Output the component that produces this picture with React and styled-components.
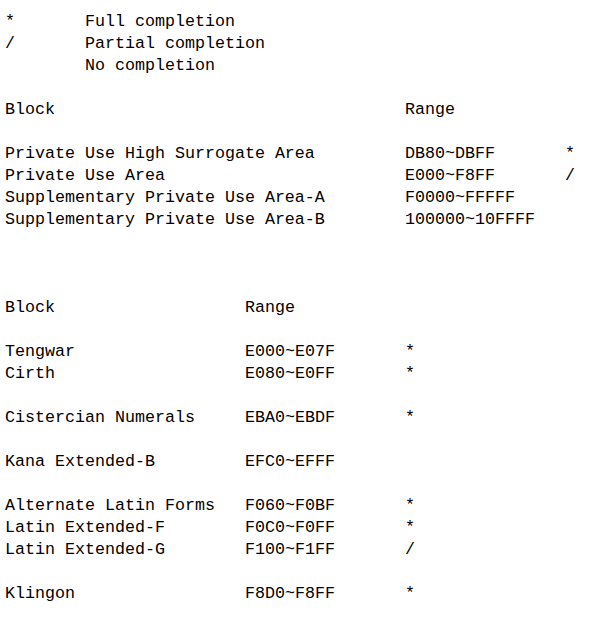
import React from "react";
import styled, { createGlobalStyle } from "styled-components";

const GlobalStyle = createGlobalStyle`
  body {
    margin: 0;
    background: #fff;
  }
`;

const Page = styled.div`
  padding: 11px 0 0 5px;
  font-family: "Liberation Mono", "DejaVu Sans Mono", monospace;
  font-size: 16.67px;
  line-height: 22px;
  color: #000;
  white-space: pre;
`;

const Grid = styled.div`
  display: grid;
  grid-template-columns: ${(props) => props.cols};
  grid-auto-rows: 22px;
`;

const Gap = styled.div`
  height: ${(props) => props.lines * 22}px;
`;

const Cell = styled.span``;

const legend = [
  ["*", "Full completion"],
  ["/", "Partial completion"],
  ["", "No completion"],
];

const ranges = [
  ["Private Use High Surrogate Area", "DB80~DBFF", "*"],
  ["Private Use Area", "E000~F8FF", "/"],
  ["Supplementary Private Use Area-A", "F0000~FFFFF", ""],
  ["Supplementary Private Use Area-B", "100000~10FFFF", ""],
];

// groups separated by a blank line
const blocks = [
  [
    ["Tengwar", "E000~E07F", "*"],
    ["Cirth", "E080~E0FF", "*"],
  ],
  [["Cistercian Numerals", "EBA0~EBDF", "*"]],
  [["Kana Extended-B", "EFC0~EFFF", ""]],
  [
    ["Alternate Latin Forms", "F060~F0BF", "*"],
    ["Latin Extended-F", "F0C0~F0FF", "*"],
    ["Latin Extended-G", "F100~F1FF", "/"],
  ],
  [["Klingon", "F8D0~F8FF", "*"]],
];

function Rows({ rows }) {
  return rows.map((r, i) =>
    r.map((c, j) => <Cell key={`${i}-${j}`}>{c}</Cell>)
  );
}

export default function App() {
  return (
    <>
      <GlobalStyle />
      <Page>
        <Grid cols="80px auto">
          <Rows rows={legend} />
        </Grid>
        <Gap lines={1} />
        <Grid cols="400px 160px auto">
          <Cell>Block</Cell>
          <Cell>Range</Cell>
          <Cell />
        </Grid>
        <Gap lines={1} />
        <Grid cols="400px 160px auto">
          <Rows rows={ranges} />
        </Grid>
        <Gap lines={3} />
        <Grid cols="240px 160px auto">
          <Cell>Block</Cell>
          <Cell>Range</Cell>
          <Cell />
        </Grid>
        {blocks.map((group, i) => (
          <React.Fragment key={i}>
            <Gap lines={1} />
            <Grid cols="240px 160px auto">
              <Rows rows={group} />
            </Grid>
          </React.Fragment>
        ))}
      </Page>
    </>
  );
}
